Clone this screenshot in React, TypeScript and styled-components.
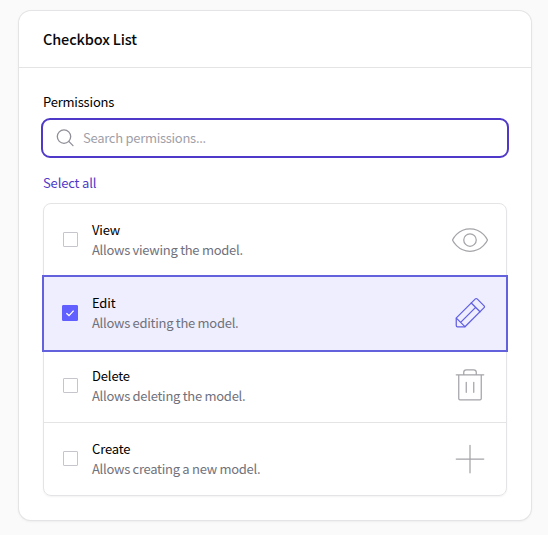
import React, { useState } from 'react';
import styled, { createGlobalStyle } from 'styled-components';

const GlobalStyle = createGlobalStyle`
  *, *::before, *::after { box-sizing: border-box; }
  body {
    margin: 0;
    background: #fafafa;
    color: #09090b;
    font-family: "Noto Sans CJK SC", "Noto Sans", sans-serif;
    font-size: 13px;
    letter-spacing: -0.28px;
    line-height: 20px;
  }
`;

const Page = styled.main`
  height: 535px;
  padding: 11px 17px 15px 19px;
  overflow: hidden;
`;

const Card = styled.section`
  height: 509px;
  border-radius: 12px;
  background: #fff;
  box-shadow: 0 0 0 1px #e4e4e7, 0 1px 3px rgba(0, 0, 0, 0.1);
`;

const CardHeader = styled.header`
  height: 57px;
  padding: 16px 24px;
  border-bottom: 1px solid #e4e4e7;
`;

const CardTitle = styled.h2`
  margin: 0;
  font-size: 14.5px;
  letter-spacing: -0.13px;
  line-height: 24px;
  font-weight: 500;
`;

const CardBody = styled.div`
  padding: 24px 24px 0;
  display: flex;
  flex-direction: column;
`;

const Label = styled.label`
  color: #000;
  letter-spacing: -0.2px;
  line-height: 20px;
`;

const SearchField = styled.div`
  display: flex;
  align-items: center;
  height: 40px;
  margin: 6px -2px 0;
  padding: 0 12px;
  gap: 8px;
  border: 2px solid #4f39c8;
  border-radius: 9px;
`;

const SearchInput = styled.input`
  flex: 1;
  min-width: 0;
  padding: 0;
  border: 0;
  outline: 0;
  background: transparent;
  font: inherit;
  letter-spacing: inherit;
  &::placeholder { color: #9f9fa9; opacity: 1; }
`;

const SelectAll = styled.button`
  align-self: flex-start;
  margin: 15px 0 10px;
  padding: 0;
  border: 0;
  background: none;
  color: #4f39c8;
  font: inherit;
  letter-spacing: -0.15px;
  line-height: 20px;
`;

const List = styled.div`
  border: 1px solid #e4e4e7;
  border-radius: 8px;
  box-shadow: 0 1px 2px rgba(0, 0, 0, 0.05);
`;

const Row = styled.label<{ $checked: boolean }>`
  display: flex;
  align-items: center;
  height: 73px;
  padding: 0 16px 0 18px;
  border-bottom: 1px solid ${(p) => (p.$checked ? 'transparent' : '#e4e4e7')};
  color: ${(p) => (p.$checked ? '#615fe0' : '#a4a4a9')};
  background: ${(p) => (p.$checked ? '#eeeefe' : 'transparent')};
  box-shadow: ${(p) => (p.$checked ? '0 0 0 2px #6461dc' : 'none')};
  &:last-child { border-bottom: 0; height: 72px; }
`;

const HiddenCheck = styled.input`
  appearance: none;
  width: 0;
  height: 0;
  margin: 0;
`;

const Box = styled.span<{ $checked: boolean }>`
  display: grid;
  place-items: center;
  width: ${(p) => (p.$checked ? 16 : 15)}px;
  height: ${(p) => (p.$checked ? 16 : 15)}px;
  flex: none;
  margin: ${(p) => (p.$checked ? '0 14px 0 0' : '0 14px 1px 1px')};
  border: 1px solid ${(p) => (p.$checked ? '#615fff' : '#c5c5cb')};
  border-radius: 1px;
  background: ${(p) => (p.$checked ? '#615fff' : '#fff')};
`;

const CheckMark = styled.svg`
  fill: none;
  stroke: #fff;
  stroke-width: 1.3;
`;

const Copy = styled.span`
  flex: 1;
  display: flex;
  flex-direction: column;
`;

const Name = styled.span`
  color: #000;
  letter-spacing: -0.15px;
`;

const Description = styled.span`
  color: #71717b;
`;

const Glyph = styled.svg`
  display: block;
  flex: none;
  fill: none;
  stroke: currentColor;
  stroke-width: 8;
  stroke-linecap: round;
  stroke-linejoin: round;
`;

const SearchGlyph = styled(Glyph)`
  color: #8f8f98;
  stroke-width: 1.3;
`;

const items = [
  {
    name: 'View',
    description: 'Allows viewing the model.',
    icon: (
      <>
        <path d="M128 56C48 56 16 128 16 128s32 72 112 72 112-72 112-72-32-72-112-72Z" />
        <circle cx="128" cy="128" r="40" />
      </>
    ),
  },
  {
    name: 'Edit',
    description: 'Allows editing the model.',
    icon: (
      <>
        <path d="M96 216H48a8 8 0 0 1-8-8v-44.7a7.9 7.9 0 0 1 2.3-5.6l120-120a8 8 0 0 1 11.4 0l44.6 44.6a8 8 0 0 1 0 11.4Z" />
        <path d="M136 64l56 56M164 92l-96 96M95.5 215.5l-55-55" />
      </>
    ),
  },
  {
    name: 'Delete',
    description: 'Allows deleting the model.',
    icon: (
      <path d="M216 56H40M104 104v64M152 104v64M200 56v152a8 8 0 0 1-8 8H64a8 8 0 0 1-8-8V56M168 56V40a16 16 0 0 0-16-16h-48a16 16 0 0 0-16 16v16" />
    ),
  },
  {
    name: 'Create',
    description: 'Allows creating a new model.',
    icon: <path d="M40 128h176M128 40v176" />,
  },
];

export default function App() {
  const [checked, setChecked] = useState<string[]>(['Edit']);
  const toggle = (name: string) =>
    setChecked((c) => (c.includes(name) ? c.filter((n) => n !== name) : [...c, name]));

  return (
    <>
      <GlobalStyle />
      <Page>
        <Card>
          <CardHeader>
            <CardTitle>Checkbox List</CardTitle>
          </CardHeader>
          <CardBody>
            <Label htmlFor="search">Permissions</Label>
            <SearchField>
              <SearchGlyph width="20" height="20" viewBox="0 0 20 20">
                <circle cx="9" cy="8.6" r="6.7" />
                <path d="M13.8 13.4 18 17.6" />
              </SearchGlyph>
              <SearchInput id="search" placeholder="Search permissions..." />
            </SearchField>
            <SelectAll type="button" onClick={() => setChecked(items.map((i) => i.name))}>
              Select all
            </SelectAll>
            <List>
              {items.map((item) => {
                const on = checked.includes(item.name);
                return (
                  <Row key={item.name} $checked={on}>
                    <HiddenCheck type="checkbox" checked={on} onChange={() => toggle(item.name)} />
                    <Box $checked={on}>
                      {on && (
                        <CheckMark width="10" height="10" viewBox="0 0 10 10">
                          <path d="M1.4 5.2 4 7.6 8.6 2.6" />
                        </CheckMark>
                      )}
                    </Box>
                    <Copy>
                      <Name>{item.name}</Name>
                      <Description>{item.description}</Description>
                    </Copy>
                    <Glyph width="40" height="40" viewBox="0 0 256 256">
                      {item.icon}
                    </Glyph>
                  </Row>
                );
              })}
            </List>
          </CardBody>
        </Card>
      </Page>
    </>
  );
}
